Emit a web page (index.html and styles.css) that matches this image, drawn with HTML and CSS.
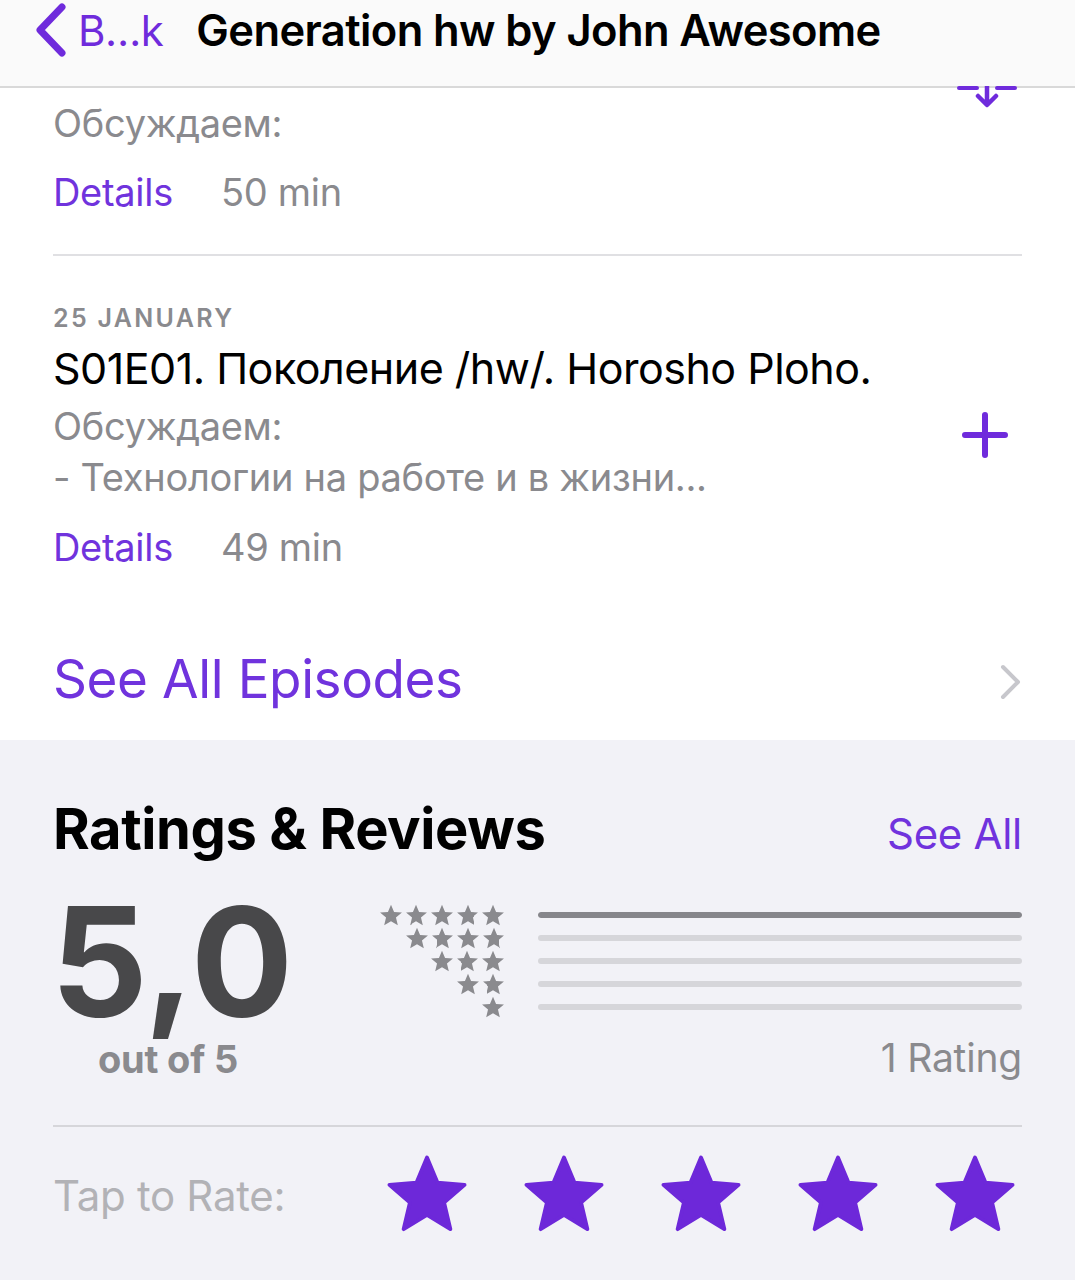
FILE: index.html
```html
<!DOCTYPE html>
<html>
<head>
<meta charset="utf-8">
<link rel="stylesheet" href="styles.css">
</head>
<body>
<header class="navbar">
  <div class="back">
    <svg class="chev" width="34" height="54" viewBox="0 0 34 54"><path d="M28 4 L6 27 L28 50" fill="none" stroke="#6f2bdc" stroke-width="7" stroke-linecap="round" stroke-linejoin="round"/></svg>
    <span class="back-text">B…k</span>
  </div>
  <div class="nav-title">Generation hw by John Awesome</div>
</header>

<main class="episodes">
  <section class="episode partial">
    <svg class="dl-icon" width="64" height="24" viewBox="0 0 64 24"><path d="M4 2 H22 M42 2 H60" stroke="#6f2bdc" stroke-width="4" stroke-linecap="round"/><path d="M32 0 V18 M23 10 L32 19 L41 10" fill="none" stroke="#6f2bdc" stroke-width="4.5" stroke-linecap="round" stroke-linejoin="round"/></svg>
    <p class="desc">Обсуждаем:</p>
    <div class="meta"><span class="details">Details</span><span class="dur">50 min</span></div>
  </section>

  <section class="episode full">
    <div class="ep-date">25 JANUARY</div>
    <div class="ep-title">S01E01. Поколение /hw/. Horosho Ploho.</div>
    <div class="ep-body">
      <div class="ep-text">
        <p class="desc">Обсуждаем:</p>
        <p class="desc">- Технологии на работе и в жизни...</p>
      </div>
      <svg class="plus" width="46" height="46" viewBox="0 0 46 46"><path d="M23 3 V43 M3 23 H43" stroke="#6f2bdc" stroke-width="6" stroke-linecap="round"/></svg>
    </div>
    <div class="meta"><span class="details">Details</span><span class="dur">49 min</span></div>
  </section>

  <div class="see-all-eps">
    <span>See All Episodes</span>
    <svg width="22" height="36" viewBox="0 0 22 36"><path d="M3 3 L18 18 L3 33" fill="none" stroke="#c7c7cc" stroke-width="4" stroke-linecap="round" stroke-linejoin="round"/></svg>
  </div>
</main>

<section class="ratings">
  <div class="rt-head">
    <h2>Ratings &amp; Reviews</h2>
    <span class="see-all">See All</span>
  </div>
  <div class="rt-body">
    <div class="score">
      <div class="big">5<span class="comma">,</span>0</div>
      <div class="outof">out of 5</div>
    </div>
    <div class="dist">
      <div class="rows">
        <div class="row"><div class="stars s5"></div><div class="bar"><div class="fill" style="width:100%"></div></div></div>
        <div class="row"><div class="stars s4"></div><div class="bar"></div></div>
        <div class="row"><div class="stars s3"></div><div class="bar"></div></div>
        <div class="row"><div class="stars s2"></div><div class="bar"></div></div>
        <div class="row"><div class="stars s1"></div><div class="bar"></div></div>
      </div>
      <div class="count">1 Rating</div>
    </div>
  </div>
  <div class="tap">
    <span class="tap-label">Tap to Rate:</span>
    <div class="tap-stars">
      <svg viewBox="0 0 24 24"><path class="bigstar" d="M12 2.2l2.75 6.6 7.05.55-5.35 4.6 1.65 6.95L12 17.2l-6.1 3.7 1.65-6.95L2.2 9.35l7.05-.55z"/></svg>
      <svg viewBox="0 0 24 24"><path class="bigstar" d="M12 2.2l2.75 6.6 7.05.55-5.35 4.6 1.65 6.95L12 17.2l-6.1 3.7 1.65-6.95L2.2 9.35l7.05-.55z"/></svg>
      <svg viewBox="0 0 24 24"><path class="bigstar" d="M12 2.2l2.75 6.6 7.05.55-5.35 4.6 1.65 6.95L12 17.2l-6.1 3.7 1.65-6.95L2.2 9.35l7.05-.55z"/></svg>
      <svg viewBox="0 0 24 24"><path class="bigstar" d="M12 2.2l2.75 6.6 7.05.55-5.35 4.6 1.65 6.95L12 17.2l-6.1 3.7 1.65-6.95L2.2 9.35l7.05-.55z"/></svg>
      <svg viewBox="0 0 24 24"><path class="bigstar" d="M12 2.2l2.75 6.6 7.05.55-5.35 4.6 1.65 6.95L12 17.2l-6.1 3.7 1.65-6.95L2.2 9.35l7.05-.55z"/></svg>
    </div>
  </div>
</section>
</body>
</html>
```

FILE: styles.css
```css
* { box-sizing: border-box; margin: 0; padding: 0; }
html, body { width: 1075px; height: 1280px; overflow: hidden; }
body {
  font-family: Inter, "Noto Sans", "Liberation Sans", sans-serif;
  background: #f2f2f7;
  color: #000;
}

.navbar {
  position: relative;
  z-index: 2;
  height: 88px;
  background: #fafafa;
  border-bottom: 2px solid #d9d9d9;
  display: flex;
  align-items: flex-start;
  padding-left: 34px;
}
.back { display: flex; align-items: center; height: 60px; }
.back-text { color: #6f2bdc; font-size: 42px; margin-left: 10px; letter-spacing: -0.5px; }
.nav-title { font-size: 43.5px; font-weight: 600; height: 60px; line-height: 60px; margin-left: 33px; letter-spacing: -0.6px; }

.episodes { background: #fff; padding: 0 53px; height: 652px; }
.episode { position: relative; }
.partial { padding-top: 10px; height: 168px; border-bottom: 2px solid #e0e0e3; }
.dl-icon { position: absolute; right: 3px; top: -2px; z-index: 3; }

.desc { color: #8a8a8e; font-size: 38px; line-height: 51px; letter-spacing: -0.3px; }
.meta { display: flex; gap: 48px; font-size: 38px; line-height: 50px; margin-top: 18px; letter-spacing: -0.3px; }
.details { color: #7033dd; }
.dur { color: #8a8a8e; }

.full { padding-top: 46px; height: 361px; }
.ep-date { color: #8a8a8e; font-size: 25px; font-weight: 600; letter-spacing: 2.3px; line-height: 32px; }
.ep-title { font-size: 43px; line-height: 52px; margin-top: 8px; letter-spacing: -0.5px; }
.ep-body { display: flex; justify-content: space-between; align-items: flex-start; margin-top: 7px; }
.plus { margin-right: 14px; margin-top: 11px; }
.full .meta { margin-top: 19px; }

.see-all-eps {
  display: flex; justify-content: space-between; align-items: center;
  height: 123px;
  color: #7033dd; font-size: 53px; letter-spacing: -0.4px;
}
.see-all-eps svg { margin-top: 6px; }

.ratings { padding: 0 53px; }
.rt-head { display: flex; justify-content: space-between; align-items: baseline; padding-top: 56px; }
.rt-head h2 { font-size: 56px; font-weight: 700; letter-spacing: -0.4px; line-height: 66px; }
.see-all { color: #7033dd; font-size: 42px; letter-spacing: -0.3px; }

.rt-body { display: flex; justify-content: space-between; margin-top: 25px; height: 240px; border-bottom: 2px solid #d6d6da; }
.score { width: 240px; display: flex; flex-direction: column; align-items: center; }
.big { font-size: 152px; font-weight: 700; color: #48484a; line-height: 150px; letter-spacing: -4px; margin-left: -6px; }
.comma { display: inline-block; transform: translateY(-7px); }
.outof { font-size: 38px; font-weight: 700; color: #8a8a8e; line-height: 40px; margin-top: 2px; margin-left: -10px; letter-spacing: -0.2px; }

.dist { width: 646px; display: flex; flex-direction: column; }
.rows { display: flex; flex-direction: column; margin-top: 16px; }
.row { display: flex; align-items: center; height: 23px; }
.stars { width: 130px; height: 22px; display: flex; justify-content: flex-end; }
.stars::before { content: ""; display: block; height: 22px; background-repeat: repeat-x; background-position: right center;
  background-size: 25.6px 22px;
  background-image: url("data:image/svg+xml;utf8,<svg xmlns='http://www.w3.org/2000/svg' width='25.6' height='22' viewBox='2 1.6 20 20'><path d='M12 2.2l2.75 6.6 7.05.55-5.35 4.6 1.65 6.95L12 17.2l-6.1 3.7 1.65-6.95L2.2 9.35l7.05-.55z' fill='%238a8a8e'/></svg>"); }
.s5::before { width: 128px; }
.s4::before { width: 102.4px; }
.s3::before { width: 76.8px; }
.s2::before { width: 51.2px; }
.s1::before { width: 25.6px; }
.bar { flex: 1; margin-left: 32px; height: 6px; border-radius: 3px; background: #d6d6da; overflow: hidden; }
.fill { height: 100%; background: #86868b; border-radius: 3px; }
.count { text-align: right; color: #8a8a8e; font-size: 39px; line-height: 40px; margin-top: 20px; letter-spacing: -0.2px; }

.tap { display: flex; align-items: center; height: 136px; }
.tap-label { color: #b2b2b6; font-size: 42px; width: 328px; letter-spacing: -0.3px; }
.tap-stars { display: flex; gap: 45px; }
.tap-stars svg { width: 92px; height: 92px; }
.bigstar { fill: #6d28d9; stroke: #6d28d9; stroke-width: 1; stroke-linejoin: round; }
```
